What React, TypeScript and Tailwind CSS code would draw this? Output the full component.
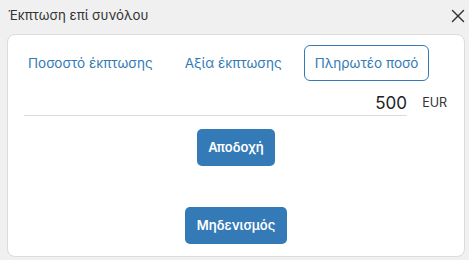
import { X } from 'lucide-react';

const App = () => {
  return (
    <div className="flex h-[260px] w-[469px] flex-col bg-[#f0f0f0] font-['Inter',sans-serif]">
      <div className="flex h-[30px] items-center justify-between pl-2 pt-[1px]">
        <span className="text-[13.3px] text-[#333]">Έκπτωση επί συνόλου</span>
        <X size={22} strokeWidth={1.6} className="text-[#333]" />
      </div>

      <div className="mb-[3px] ml-[7px] mr-[4px] mt-[4px] flex flex-1 flex-col rounded-[8px] border border-[#dcdcdc] bg-white">
        <div className="flex items-center pl-[20px] pt-[10px] text-[13.5px] text-[#337ab7]">
          <button className="mr-[32px] h-[36px]">Ποσοστό έκπτωσης</button>
          <button className="mr-[22px] h-[36px]">Αξία έκπτωσης</button>
          <button className="h-[36px] rounded-[6px] border border-[#337ab7] px-[10px]">Πληρωτέο ποσό</button>
        </div>

        <div className="mt-[11px] flex items-start pl-[16px] pr-[17px]">
          <div className="flex h-[24px] flex-1 items-center justify-end border-b border-[#dcdcdc] text-[17px] text-[#222]">
            500
          </div>
          <span className="flex h-[23px] w-[40px] items-center justify-end text-[12.5px] text-[#333]">EUR</span>
        </div>

        <div className="mt-[13px] flex justify-center">
          <button className="h-[37px] rounded-[5px] bg-[#337ab7] px-[11px] text-[13px] font-semibold text-white">
            Αποδοχή
          </button>
        </div>

        <div className="mt-[41px] flex justify-center">
          <button className="h-[37px] rounded-[5px] bg-[#337ab7] px-[12px] text-[13px] font-semibold text-white">
            Μηδενισμός
          </button>
        </div>
      </div>
    </div>
  );
};

export default App;
